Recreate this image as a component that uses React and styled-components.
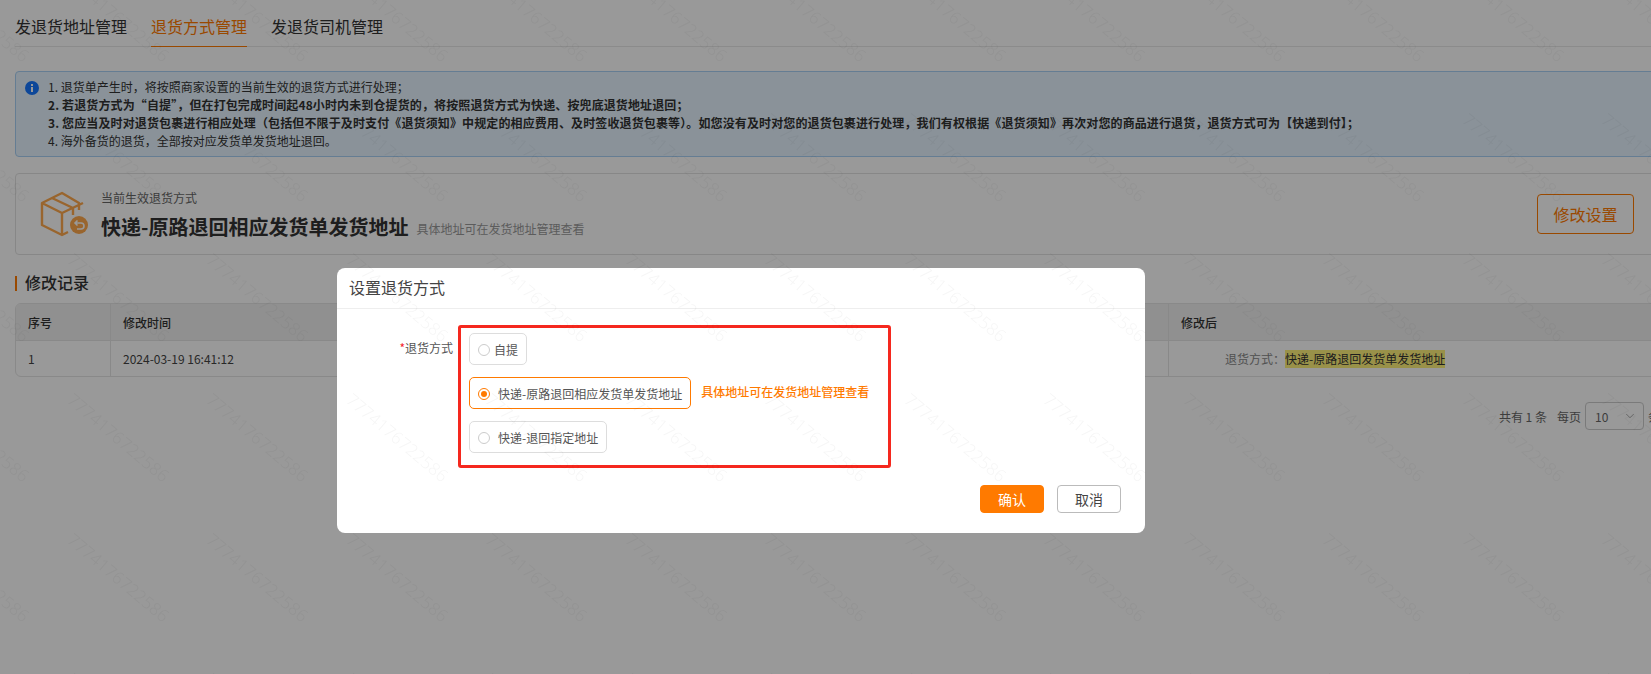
import React from "react";
import styled, { createGlobalStyle } from "styled-components";
import { ChevronDown } from "lucide-react";

const GlobalStyle = createGlobalStyle`
  html, body {
    margin: 0;
    padding: 0;
    width: 1651px;
    height: 674px;
    overflow: hidden;
    background: #fff;
  }
  * {
    box-sizing: border-box;
  }
  body {
    font-family: "Noto Sans CJK SC", "Noto Sans", sans-serif;
    font-size: 12px;
    color: #333;
  }
`;

const Page = styled.div`
  width: 1675px;
  padding-left: 15px;
`;

const TabBar = styled.div`
  display: flex;
  gap: 24px;
  height: 47px;
  border-bottom: 1px solid #e8e8e8;
`;

const Tab = styled.div`
  height: 47px;
  padding-top: 16px;
  font-size: 16px;
  line-height: 20px;
  color: ${(p) => (p.$active ? "#ff7a00" : "#333")};
  border-bottom: 1px solid ${(p) => (p.$active ? "#ff7a00" : "transparent")};
`;

const Alert = styled.div`
  display: flex;
  gap: 9px;
  margin-top: 24px;
  height: 86px;
  padding: 6px 9px;
  background: #e6f4ff;
  border: 1px solid #a9d0f5;
  border-radius: 4px;
`;

const AlertIcon = styled.svg`
  flex: none;
  width: 14px;
  height: 14px;
  margin-top: 3px;
`;

const AlertLine = styled.div`
  line-height: 18px;
  white-space: nowrap;
  color: #333;
  font-weight: ${(p) => (p.$bold ? 600 : 400)};
  letter-spacing: ${(p) => (p.$bold ? "0.12px" : "0")};
`;

const MethodCard = styled.div`
  display: flex;
  align-items: center;
  margin-top: 16px;
  height: 82px;
  padding: 0 40px 0 23px;
  border: 1px solid #e2e2e2;
  border-radius: 4px;
`;

const MethodInfo = styled.div`
  flex: 1;
  margin-left: 12px;
`;

const MethodLabel = styled.div`
  line-height: 18px;
  color: #666;
`;

const MethodRow = styled.div`
  display: flex;
  align-items: center;
  margin-top: 7px;
`;

const MethodName = styled.div`
  font-size: 20px;
  line-height: 26px;
  font-weight: 700;
  color: #333;
`;

const MethodHint = styled.div`
  margin: 3px 0 0 8px;
  color: #999;
`;

const EditButton = styled.button`
  width: 97px;
  height: 40px;
  padding: 0;
  background: #fff;
  border: 1px solid #ff7a00;
  border-radius: 4px;
  color: #ff7a00;
  font: inherit;
  font-size: 16px;
`;

const SectionTitle = styled.div`
  display: flex;
  align-items: flex-start;
  gap: 8px;
  margin-top: 21px;
  height: 15px;
  font-size: 16px;
  line-height: 12px;
  font-weight: 500;
  color: #333;

  &::before {
    content: "";
    width: 2px;
    height: 15px;
    background: #ff7a00;
  }
`;

const Table = styled.div`
  display: grid;
  grid-template-columns: 95px 1058px 1fr;
  grid-template-rows: 37px 35px;
  margin-top: 12px;
  border: 1px solid #e4e4e4;
  border-radius: 6px;
  overflow: hidden;
`;

const HeadCell = styled.div`
  display: flex;
  align-items: center;
  padding-left: 12px;
  background: #f0f0f0;
  border-right: 1px solid #e4e4e4;
  border-bottom: 1px solid #e4e4e4;
  font-weight: 500;
  color: #333;
`;

const BodyCell = styled.div`
  display: flex;
  align-items: center;
  padding-left: ${(p) => p.$indent || 12}px;
  border-right: 1px solid #e4e4e4;
  color: #444;
`;

const ChangeKey = styled.span`
  color: #888;
`;

const ChangeValue = styled.span`
  padding: 0;
  line-height: 18px;
  background: #fff27a;
  color: #333;
`;

const Pagination = styled.div`
  display: flex;
  justify-content: flex-end;
  align-items: center;
  gap: 4px;
  margin-top: 25px;
  padding-right: 15px;
  color: #666;
`;

const PageTotal = styled.span`
  margin-right: 6px;
`;

const PageSelect = styled.div`
  display: flex;
  justify-content: space-between;
  align-items: center;
  width: 59px;
  height: 28px;
  padding: 0 6px 0 9px;
  border: 1px solid #ccc;
  border-radius: 4px;
  color: #666;
`;

const Mask = styled.div`
  position: fixed;
  inset: 0;
  background: rgba(0, 0, 0, 0.4);
`;

const Modal = styled.div`
  position: fixed;
  left: 337px;
  top: 268px;
  display: flex;
  flex-direction: column;
  width: 808px;
  height: 265px;
  background: #fff;
  border-radius: 8px;
`;

const ModalHeader = styled.div`
  display: flex;
  align-items: center;
  height: 41px;
  padding: 0 0 2px 12px;
  border-bottom: 1px solid #eee;
  font-size: 16px;
  color: #444;
`;

const FormRow = styled.div`
  display: flex;
  padding-top: 16px;
`;

const FormLabel = styled.div`
  width: 116px;
  margin-right: 5px;
  padding-top: 14px;
  line-height: 18px;
  text-align: right;
  color: #555;

  &::before {
    content: "*";
    color: #f5222d;
  }
`;

const Highlight = styled.div`
  display: flex;
  flex-direction: column;
  gap: 12px;
  width: 433px;
  height: 143px;
  padding: 5px 8px;
  border: 3px solid #f5281e;
  border-radius: 3px;
`;

const OptionRow = styled.div`
  display: flex;
  align-items: center;
`;

const Option = styled.div`
  display: flex;
  align-items: center;
  gap: ${(p) => p.$gap || 8}px;
  height: 32px;
  padding: 1px 8px 0;
  border: 1px solid ${(p) => (p.$checked ? "#ff7a00" : "#ddd")};
  border-radius: 5px;
  color: #555;
`;

const Radio = styled.span`
  display: flex;
  justify-content: center;
  align-items: center;
  flex: none;
  width: 12px;
  height: 12px;
  border: 1px solid ${(p) => (p.$checked ? "#ff7a00" : "#ccc")};
  border-radius: 50%;

  &::after {
    content: "";
    display: ${(p) => (p.$checked ? "block" : "none")};
    width: 6px;
    height: 6px;
    border-radius: 50%;
    background: #ff7a00;
  }
`;

const OptionHint = styled.span`
  margin: 0 0 4px 10px;
  color: #ff7a00;
  font-weight: 500;
`;

const ModalFooter = styled.div`
  display: flex;
  justify-content: flex-end;
  gap: 13px;
  margin-top: auto;
  padding: 0 24px 20px 0;
`;

const FooterButton = styled.button`
  width: 64px;
  height: 28px;
  padding: 0;
  border: 1px solid ${(p) => (p.$primary ? "#ff7a00" : "#bbb")};
  border-radius: 4px;
  background: ${(p) => (p.$primary ? "#ff7a00" : "#fff")};
  color: ${(p) => (p.$primary ? "#fff" : "#444")};
  font: inherit;
  font-size: 14px;
`;

const WatermarkLayer = styled.div`
  position: fixed;
  left: -91px;
  top: -53px;
  display: grid;
  grid-template-columns: repeat(14, 139.5px);
  grid-auto-rows: 140px;
  pointer-events: none;
`;

const WatermarkText = styled.div`
  display: flex;
  justify-content: center;
  align-items: center;
  transform: rotate(40deg);
  font-family: "Noto Sans", sans-serif;
  font-size: 17px;
  font-weight: 300;
  color: rgba(0, 0, 0, 0.04);
  white-space: nowrap;
`;

const BoxIcon = () => (
  <svg width="50" height="48" viewBox="0 0 50 48" fill="none">
    <path
      d="M40 20V13L23 3 3 13v22l20 10 6-3M3 13l20 10 21-10M23 23v22M13 8l21 10v7"
      stroke="#ffa94d"
      strokeWidth="2.4"
      strokeLinejoin="round"
    />
    <circle cx="40" cy="35" r="9" fill="#ffa94d" />
    <path
      d="M36 33h6a3 3 0 0 1 0 6h-4M38.5 30.5 36 33l2.5 2.5"
      stroke="#fff"
      strokeWidth="1.6"
    />
  </svg>
);

const InfoIcon = () => (
  <AlertIcon viewBox="0 0 14 14">
    <circle cx="7" cy="7" r="7" fill="#1677ff" />
    <rect x="6" y="6" width="2" height="5" fill="#fff" />
    <rect x="6" y="3" width="2" height="2" fill="#fff" />
  </AlertIcon>
);

const tabs = ["发退货地址管理", "退货方式管理", "发退货司机管理"];
const watermarks = Array.from({ length: 14 * 6 }, (_, i) => i);

const App = () => {
  return (
    <>
      <GlobalStyle />
      <Page>
        <TabBar>
          {tabs.map((tab) => (
            <Tab key={tab} $active={tab === "退货方式管理"}>
              {tab}
            </Tab>
          ))}
        </TabBar>
        <Alert>
          <InfoIcon />
          <div>
            <AlertLine>{"1. 退货单产生时\uFF0C将按照商家设置的当前生效的退货方式进行处理\uFF1B"}</AlertLine>
            <AlertLine $bold>
              {"2. 若退货方式为\u201C自提\u201D\uFF0C但在打包完成时间起48小时内未到仓提货的\uFF0C将按照退货方式为快递、按兜底退货地址退回\uFF1B"}
            </AlertLine>
            <AlertLine $bold>
              {"3. 您应当及时对退货包裹进行相应处理\uFF08包括但不限于及时支付《退货须知》中规定的相应费用、及时签收退货包裹等\uFF09。如您没有及时对您的退货包裹进行处理\uFF0C我们有权根据《退货须知》再次对您的商品进行退货\uFF0C退货方式可为【快递到付】\uFF1B"}
            </AlertLine>
            <AlertLine>{"4. 海外备货的退货\uFF0C全部按对应发货单发货地址退回。"}</AlertLine>
          </div>
        </Alert>
        <MethodCard>
          <BoxIcon />
          <MethodInfo>
            <MethodLabel>当前生效退货方式</MethodLabel>
            <MethodRow>
              <MethodName>快递-原路退回相应发货单发货地址</MethodName>
              <MethodHint>具体地址可在发货地址管理查看</MethodHint>
            </MethodRow>
          </MethodInfo>
          <EditButton>修改设置</EditButton>
        </MethodCard>
        <SectionTitle>修改记录</SectionTitle>
        <Table>
          <HeadCell>序号</HeadCell>
          <HeadCell>修改时间</HeadCell>
          <HeadCell>修改后</HeadCell>
          <BodyCell>1</BodyCell>
          <BodyCell>2024-03-19 16:41:12</BodyCell>
          <BodyCell $indent={56}>
            <ChangeKey>{"退货方式\uFF1A"}</ChangeKey>
            <ChangeValue>快递-原路退回发货单发货地址</ChangeValue>
          </BodyCell>
        </Table>
        <Pagination>
          <PageTotal>共有 1 条</PageTotal>
          <span>每页</span>
          <PageSelect>
            10
            <ChevronDown size={14} strokeWidth={1.2} color="#888" />
          </PageSelect>
          <span>条</span>
        </Pagination>
      </Page>
      <Mask />
      <Modal>
        <ModalHeader>设置退货方式</ModalHeader>
        <FormRow>
          <FormLabel>退货方式</FormLabel>
          <Highlight>
            <OptionRow>
              <Option $gap={4}>
                <Radio />
                自提
              </Option>
            </OptionRow>
            <OptionRow>
              <Option $checked>
                <Radio $checked />
                快递-原路退回相应发货单发货地址
              </Option>
              <OptionHint>具体地址可在发货地址管理查看</OptionHint>
            </OptionRow>
            <OptionRow>
              <Option>
                <Radio />
                快递-退回指定地址
              </Option>
            </OptionRow>
          </Highlight>
        </FormRow>
        <ModalFooter>
          <FooterButton $primary>确认</FooterButton>
          <FooterButton>取消</FooterButton>
        </ModalFooter>
      </Modal>
      <WatermarkLayer>
        {watermarks.map((i) => (
          <WatermarkText key={i}>7774176722586</WatermarkText>
        ))}
      </WatermarkLayer>
    </>
  );
};

export default App;
